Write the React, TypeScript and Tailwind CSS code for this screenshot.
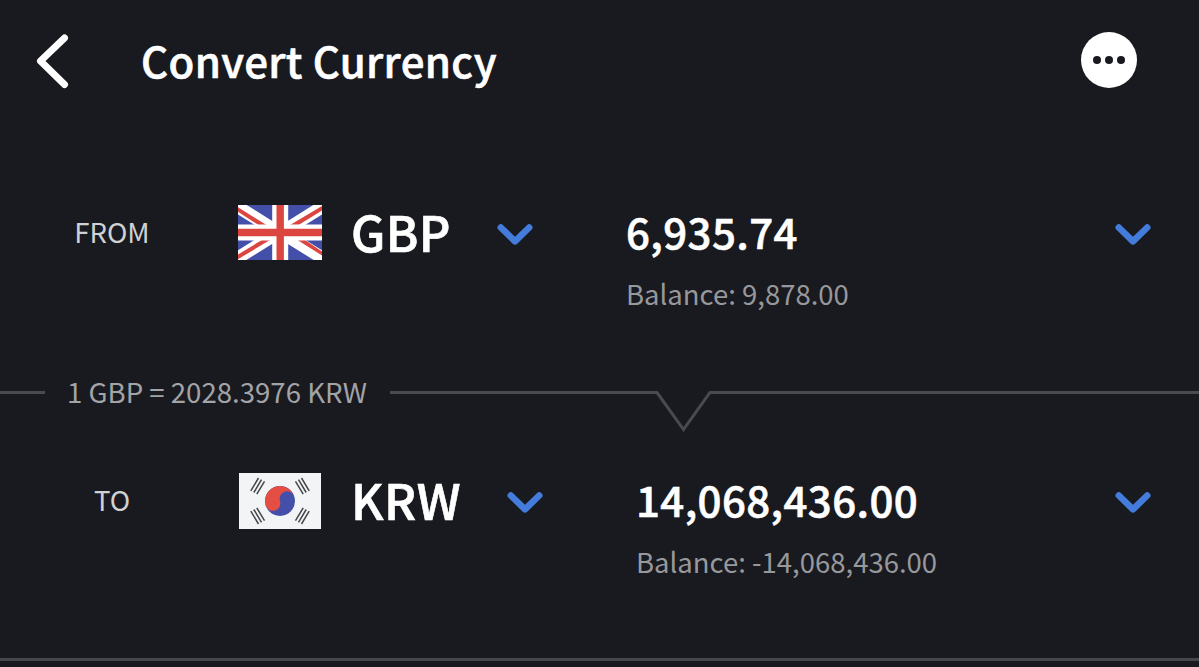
import type {ReactNode} from 'react'

function BritishFlag() {
  return (
    <svg className="mb-px block h-[55px] w-[84px]" viewBox="0 0 84 55">
      <rect width="84" height="55" fill="#444faa" />
      <path d="M-2 0.7L42 28.4L86 0.7M-2 54L42 26.6L86 54" stroke="#fff" strokeWidth="12.6" fill="none" />
      <path
        d="M0 2.2V6.8L20.5 20H28.5ZM84 1V5.6L60.5 20H52ZM0 49.6V54.2L32 35H24ZM59.5 35L84 50.6V46.4L67 35Z"
        fill="#db4740"
      />
      <path d="M42.2 0V55M0 27.5H84" stroke="#fff" strokeWidth="16" />
      <path d="M42.2 0V55M0 27.5H84" stroke="#db4740" strokeWidth="7.4" />
    </svg>
  )
}

function KoreanFlag() {
  return (
    <svg className="mx-px block h-[56px] w-[82px]" viewBox="0 0 82 56">
      <rect width="82" height="56" fill="#f3f4f5" />
      <circle cx="41" cy="28" r="15" fill="#444faa" />
      <path d="M26.7 32.6A15 15 0 0 1 55.3 23.4A7.5 7.5 0 0 0 41 28A7.5 7.5 0 0 1 26.7 32.6Z" fill="#e54e43" />
      <g stroke="#45474b" strokeWidth="1.5">
        <path d="M11.8 17.8L19.5 5M14.8 19.5L22.5 6.7M17.8 21.2L25.5 8.4" />
        <path d="M70.2 17.8L62.5 5M67.2 19.5L59.5 6.7M64.2 21.2L56.5 8.4" />
        <path d="M11.8 38.2L19.5 51M14.8 36.5L22.5 49.3M17.8 34.8L25.5 47.6" />
        <path d="M70.2 38.2L62.5 51M67.2 36.5L59.5 49.3M64.2 34.8L56.5 47.6" />
      </g>
    </svg>
  )
}

function Chevron() {
  return (
    <svg className="mt-[8px] block h-[24px] w-[36px] shrink-0" viewBox="0 0 36 24" fill="none">
      <path d="M3.8 4.5L18 18.3L32.2 4.5" stroke="#437cda" strokeWidth="6.6" strokeLinecap="round" strokeLinejoin="round" />
    </svg>
  )
}

type CurrencyRowProps = {
  label: string
  flag: ReactNode
  code: string
  amount: string
  balance: string
}

function CurrencyRow({label, flag, code, amount, balance}: CurrencyRowProps) {
  return (
    <section className="flex h-[130px] items-start pr-[48px]">
      <div className="flex h-16 w-[238px] shrink-0 items-center pt-[2px] pr-[14px]">
        <span className="w-full text-center text-[27.5px] text-[#d0d1d4]">{label}</span>
      </div>
      <div className="flex h-16 items-center pt-[4px]">{flag}</div>
      <div className="ml-[29px] flex h-16 items-center text-[49px] font-medium tracking-[0.4px] [-webkit-text-stroke:0.7px_white]">
        {code}
      </div>
      <div className="ml-[46px] flex h-16 items-center">
        <Chevron />
      </div>
      <div className="ml-[93px] flex-1">
        <div className="text-[42px] leading-[64px] font-medium tracking-[0.4px] [-webkit-text-stroke:0.6px_white]">
          {amount}
        </div>
        <div className="text-[27.5px] leading-[60px] text-[#97989c]">{balance}</div>
      </div>
      <div className="flex h-16 items-center">
        <Chevron />
      </div>
    </section>
  )
}

export default function App() {
  return (
    <main className="flex h-[667px] w-[1199px] flex-col overflow-hidden bg-[#191a1f] font-['Noto_Sans_CJK_SC','Noto_Sans',sans-serif] whitespace-nowrap text-white">
      <header className="flex h-[120px] items-center pr-[62px] pl-[36px]">
        <svg className="mt-[2px] block h-[56px] w-[34px]" viewBox="0 0 34 56" fill="none">
          <path d="M28.5 5L4.5 28L28.5 51.5" stroke="#fff" strokeWidth="7" strokeLinecap="round" strokeLinejoin="round" />
        </svg>
        <h1 className="ml-[71px] flex-1 text-[42px] leading-[60px] font-medium tracking-[0.35px] [-webkit-text-stroke:0.6px_white]">
          Convert Currency
        </h1>
        <button className="flex size-[56px] items-center justify-center gap-[4px] rounded-full bg-white">
          <span className="size-[8px] rounded-full bg-[#191a1f]" />
          <span className="size-[8px] rounded-full bg-[#191a1f]" />
          <span className="size-[8px] rounded-full bg-[#191a1f]" />
        </button>
      </header>

      <div className="mt-[79px]">
        <CurrencyRow label="FROM" flag={<BritishFlag />} code="GBP" amount="6,935.74" balance="Balance: 9,878.00" />
      </div>

      <div className="mt-[31px] flex h-[80px] items-start">
        <div className="mt-[31px] h-[3px] w-[45px] bg-[#4a4b50]" />
        <div className="ml-[22px] w-[323px] text-[27.6px] leading-[62px] text-[#a3a4a8]">1 GBP = 2028.3976 KRW</div>
        <div className="mt-[31px] h-[3px] w-[266px] bg-[#4a4b50]" />
        <svg className="mt-[31px] block h-[44px] w-[56px]" viewBox="0 0 56 44" fill="none">
          <path d="M0 1.5H1L27.5 38.5L54 1.5H56" stroke="#4a4b50" strokeWidth="3" />
        </svg>
        <div className="mt-[31px] h-[3px] flex-1 bg-[#4a4b50]" />
      </div>

      <div className="mt-[27px]">
        <CurrencyRow label="TO" flag={<KoreanFlag />} code="KRW" amount="14,068,436.00" balance="Balance: -14,068,436.00" />
      </div>
      <div className="mt-[61px] h-[3px] shrink-0 bg-[#46474c]" />
    </main>
  )
}
